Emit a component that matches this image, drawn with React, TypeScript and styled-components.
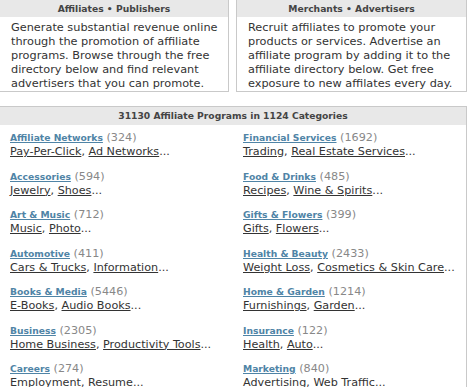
import styled, { createGlobalStyle } from "styled-components";

type Category = {
  name: string;
  count: number;
  subs: string[];
};

const left: Category[] = [
  { name: "Affiliate Networks", count: 324, subs: ["Pay-Per-Click", "Ad Networks"] },
  { name: "Accessories", count: 594, subs: ["Jewelry", "Shoes"] },
  { name: "Art & Music", count: 712, subs: ["Music", "Photo"] },
  { name: "Automotive", count: 411, subs: ["Cars & Trucks", "Information"] },
  { name: "Books & Media", count: 5446, subs: ["E-Books", "Audio Books"] },
  { name: "Business", count: 2305, subs: ["Home Business", "Productivity Tools"] },
  { name: "Careers", count: 274, subs: ["Employment", "Resume"] },
];

const right: Category[] = [
  { name: "Financial Services", count: 1692, subs: ["Trading", "Real Estate Services"] },
  { name: "Food & Drinks", count: 485, subs: ["Recipes", "Wine & Spirits"] },
  { name: "Gifts & Flowers", count: 399, subs: ["Gifts", "Flowers"] },
  { name: "Health & Beauty", count: 2433, subs: ["Weight Loss", "Cosmetics & Skin Care"] },
  { name: "Home & Garden", count: 1214, subs: ["Furnishings", "Garden"] },
  { name: "Insurance", count: 122, subs: ["Health", "Auto"] },
  { name: "Marketing", count: 840, subs: ["Advertising", "Web Traffic"] },
];

const CategoryColumn: React.FC<{ items: Category[] }> = ({ items }) => (
  <Column>
    {items.map((c) => (
      <Entry key={c.name}>
        <TitleRow>
          <CatLink href="#">{c.name}</CatLink> <Count>({c.count})</Count>
        </TitleRow>
        <SubRow>
          {c.subs.map((s, i) => (
            <span key={s}>
              <SubLink href="#">{s}</SubLink>
              {i < c.subs.length - 1 ? ", " : "..."}
            </span>
          ))}
        </SubRow>
      </Entry>
    ))}
  </Column>
);

const App = () => {
  return (
    <>
      <GlobalStyle />
      <Page>
        <TopRow>
          <Box width={230}>
            <BoxHeader>Affiliates • Publishers</BoxHeader>
            <BoxText>
              Generate substantial revenue online<br />
              through the promotion of affiliate<br />
              programs. Browse through the free<br />
              directory below and find relevant<br />
              advertisers that you can promote.
            </BoxText>
          </Box>
          <Box width={231}>
            <BoxHeader>Merchants • Advertisers</BoxHeader>
            <BoxText>
              Recruit affiliates to promote your<br />
              products or services. Advertise an<br />
              affiliate program by adding it to the<br />
              affiliate directory below. Get free<br />
              exposure to new affilates every day.
            </BoxText>
          </Box>
        </TopRow>
        <Directory>
          <DirHeader>31130 Affiliate Programs in 1124 Categories</DirHeader>
          <Columns>
            <CategoryColumn items={left} />
            <CategoryColumn items={right} />
          </Columns>
        </Directory>
      </Page>
    </>
  );
};

export default App;

const GlobalStyle = createGlobalStyle`
  html, body {
    margin: 0;
    padding: 0;
    background: #fff;
    overflow: hidden;
  }
  body {
    font-family: "DejaVu Sans", Verdana, sans-serif;
    color: #333;
  }
`;

const Page = styled.div`
  width: 468px;
  margin: -1px 0 0 -1px;
`;

const TopRow = styled.div`
  display: flex;
  gap: 7px;
`;

const Box = styled.div<{ width: number }>`
  width: ${(p) => p.width}px;
  border: 1px solid #c9c9c9;
  box-sizing: border-box;
  background: #fff;
`;

const BoxHeader = styled.div`
  height: 17px;
  line-height: 17px;
  background: #e8e8e8;
  text-align: center;
  font-size: 9.2px;
  font-weight: 700;
  color: #444;
`;

const BoxText = styled.p`
  margin: 0;
  padding: 4px 4px 0 11px;
  font-size: 11.3px;
  line-height: 14px;
  color: #333;
  white-space: nowrap;
`;

const Directory = styled.div`
  margin-top: 14px;
  border: 1px solid #c9c9c9;
  width: 468px;
  box-sizing: border-box;
`;

const DirHeader = styled(BoxHeader)`
  height: 18px;
  line-height: 18px;
`;

const Columns = styled.div`
  display: grid;
  grid-template-columns: 233px 1fr;
  padding: 6px 0 0 10px;
`;

const Column = styled.div`
  display: flex;
  flex-direction: column;
  gap: 10.5px;
`;

const Entry = styled.div`
  display: flex;
  flex-direction: column;
`;

const TitleRow = styled.div`
  line-height: 14px;
  font-size: 11.2px;
  white-space: nowrap;
`;

const CatLink = styled.a`
  font-size: 9.2px;
  font-weight: 700;
  color: #4f84a6;
  text-decoration: underline;
`;

const Count = styled.span`
  color: #888;
  font-size: 11.2px;
`;

const SubRow = styled.div`
  line-height: 14px;
  font-size: 11.2px;
  color: #333;
  white-space: nowrap;
`;

const SubLink = styled.a`
  color: #333;
  text-decoration: underline;
`;
